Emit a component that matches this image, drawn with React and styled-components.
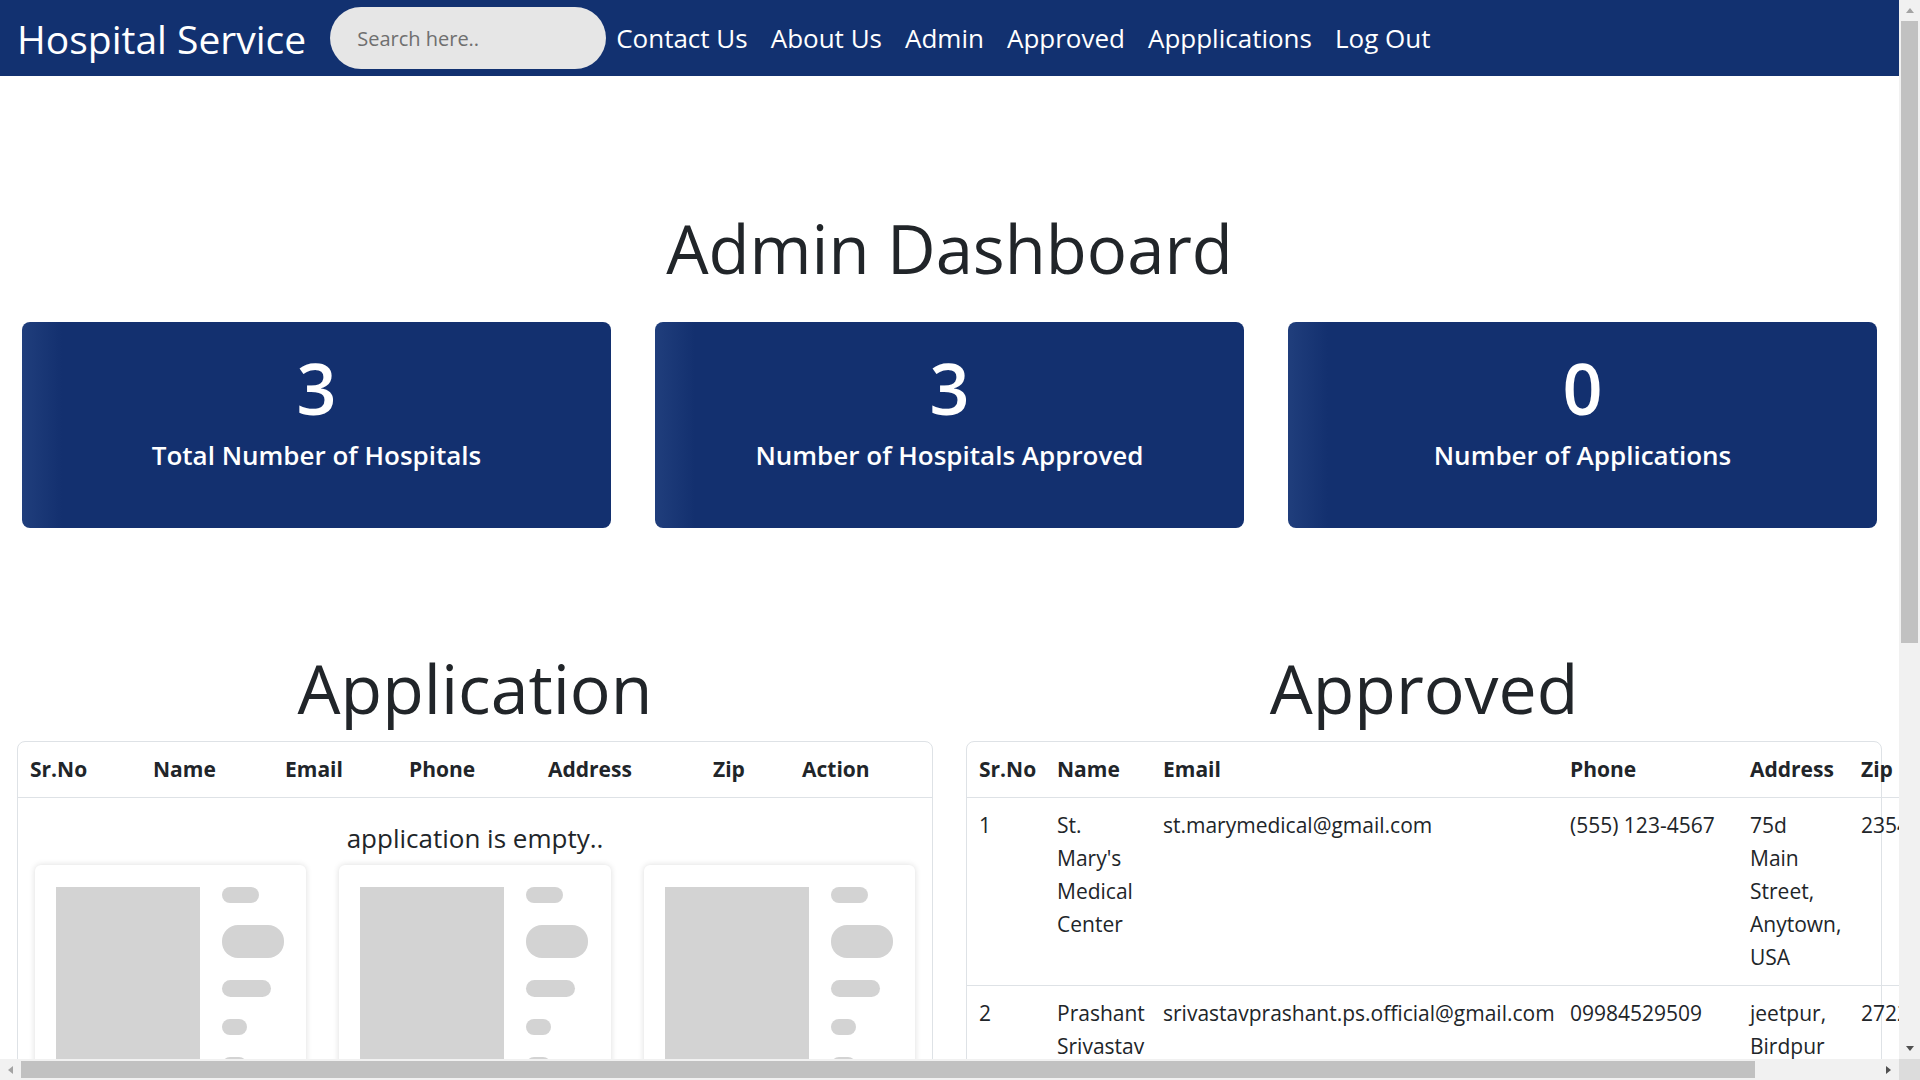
import React from 'react'
import styled, { createGlobalStyle } from "styled-components";

const GlobalStyle = createGlobalStyle`
  html, body {
    margin: 0;
    padding: 0;
    overflow: hidden;
  }
  body {
    font-family: "Open Sans", "Noto Sans", sans-serif;
    color: #212529;
    background: #fff;
  }
  * {
    box-sizing: border-box;
  }
`;

// browser frame: page area plus the classic scrollbars around it
const Frame = styled.div`
  display: grid;
  grid-template-columns: minmax(0, 1fr) 21px;
  grid-template-rows: minmax(0, 1fr) 21px;
  width: 100vw;
  height: 100vh;
`;

const ScrollArea = styled.div`
  overflow: hidden;
  min-width: 0;
  min-height: 0;
`;

const VScrollbar = styled.div`
  display: flex;
  flex-direction: column;
  background: #f1f1f1;
`;

const HScrollbar = styled.div`
  display: flex;
  background: #f1f1f1;
`;

const ScrollButton = styled.div`
  flex: 0 0 21px;
  display: flex;
  align-items: center;
  justify-content: center;
`;

const Arrow = styled.span`
  width: 0;
  height: 0;
  border-style: solid;
  border-color: transparent;
  ${(p) => {
    const c = p.$active ? '#505050' : '#a3a3a3';
    switch (p.$dir) {
      case 'up':
        return `border-width: 0 4.5px 5px; border-bottom-color: ${c};`;
      case 'down':
        return `border-width: 5px 4.5px 0; border-top-color: ${c};`;
      case 'left':
        return `border-width: 4.5px 5px 4.5px 0; border-right-color: ${c};`;
      default:
        return `border-width: 4.5px 0 4.5px 5px; border-left-color: ${c};`;
    }
  }}
`;

const Track = styled.div`
  flex: 1;
  display: flex;
  flex-direction: ${(p) => (p.$vertical ? 'column' : 'row')};
  padding: ${(p) => (p.$vertical ? '0 2px' : '2px 0')};
`;

const Thumb = styled.div`
  flex: 0 0 ${(p) => p.$size}px;
  background: #c1c1c1;
`;

const Corner = styled.div`
  background: #dcdcdc;
`;

const Page = styled.div`
  padding-bottom: 120px;
`;

const Navbar = styled.nav`
  display: flex;
  align-items: center;
  height: 76px;
  padding: 0 17px;
  background: #123170;
`;

const Brand = styled.a`
  font-size: 39px;
  color: #fff;
  text-decoration: none;
  margin-right: 24px;
  white-space: nowrap;
`;

const SearchInput = styled.input`
  width: 276px;
  height: 62px;
  border: none;
  border-radius: 31px;
  background: #e6e6e6;
  padding: 0 0 0 27px;
  font-family: inherit;
  font-size: 20px;
  color: #212529;
  outline: none;
  margin-right: 10px;

  &::placeholder {
    color: #6f6f6f;
  }
`;

const NavMenu = styled.ul`
  display: flex;
  gap: 23px;
  list-style: none;
  margin: 0;
  padding: 0;
`;

const NavLink = styled.a`
  font-size: 26px;
  color: #fff;
  text-decoration: none;
  white-space: nowrap;
`;

const PageTitle = styled.h1`
  margin: 130px 0 32px;
  font-size: 67px;
  font-weight: 500;
  line-height: 84px;
  text-align: center;
`;

const StatGrid = styled.div`
  display: grid;
  grid-template-columns: repeat(3, minmax(0, 1fr));
  gap: 44px;
  padding: 0 22px;
`;

const StatCard = styled.div`
  height: 206px;
  padding: 24px 16px;
  border-radius: 8px;
  background: linear-gradient(to right, #203e7c 0, #13306f 40px);
  color: #fff;
  text-align: center;
`;

const StatValue = styled.div`
  font-size: 70px;
  font-weight: 600;
  line-height: 84px;
`;

const StatLabel = styled.div`
  margin-top: 8px;
  font-size: 26px;
  font-weight: 600;
  line-height: 34px;
`;

const Sections = styled.div`
  display: grid;
  grid-template-columns: minmax(0, 1fr) minmax(0, 1fr);
  gap: 33px;
  padding: 0 17px;
  margin-top: 118px;
`;

const Section = styled.section`
  min-width: 0;
`;

const SectionTitle = styled.h2`
  margin: 0 0 11px;
  font-size: 68px;
  font-weight: 500;
  line-height: 84px;
  text-align: center;
`;

const TableCard = styled.div`
  border: 1px solid #dee2e6;
  border-radius: 8px;
`;

const Table = styled.table`
  width: ${(p) => p.$width || '100%'};
  border-collapse: collapse;
  table-layout: fixed;
  font-size: 21px;
  line-height: 33px;
`;

const Th = styled.th`
  padding: 11px 12px;
  text-align: left;
  font-weight: 700;
  border-bottom: 1px solid #dee2e6;
  white-space: nowrap;
`;

const Td = styled.td`
  padding: 11px 12px;
  vertical-align: top;
  border-bottom: 1px solid #dee2e6;
  white-space: ${(p) => (p.$nowrap ? 'nowrap' : 'normal')};
`;

const ActionButton = styled.button`
  font-family: inherit;
  font-size: 18px;
  padding: 2px 12px;
  border: none;
  border-radius: 6px;
  background: #dc3545;
  color: #fff;
`;

const EmptyState = styled.div`
  padding: 21px 17px 24px;
`;

const EmptyText = styled.p`
  margin: 0 0 7px;
  text-align: center;
  font-size: 26px;
  line-height: 39px;
`;

const SkeletonGrid = styled.div`
  display: grid;
  grid-template-columns: repeat(3, minmax(0, 1fr));
  gap: 33px;
`;

const SkeletonCard = styled.div`
  display: flex;
  gap: 22px;
  padding: 22px 21px;
  border-radius: 6px;
  background: #fff;
  box-shadow: 0 0 6px rgba(0, 0, 0, 0.14);
`;

const SkeletonImage = styled.div`
  width: 144px;
  height: 260px;
  background: #d3d3d3;
  flex-shrink: 0;
`;

const SkeletonLines = styled.div`
  display: flex;
  flex-direction: column;
  gap: 22px;
`;

const SkeletonPill = styled.div`
  width: ${(p) => p.$w}px;
  height: ${(p) => p.$h}px;
  border-radius: 16px;
  background: #d3d3d3;
`;

const navItems = ['Contact Us', 'About Us', 'Admin', 'Approved', 'Appplications', 'Log Out'];

const stats = [
  { value: 3, label: 'Total Number of Hospitals' },
  { value: 3, label: 'Number of Hospitals Approved' },
  { value: 0, label: 'Number of Applications' },
];

const approved = [
  { id: 1, name: "St. Mary's Medical Center", email: 'st.marymedical@gmail.com', phone: '(555) 123-4567', address: '75d Main Street, Anytown, USA', zip: '23546' },
  { id: 2, name: 'Prashant Srivastav', email: 'srivastavprashant.ps.official@gmail.com', phone: '09984529509', address: 'jeetpur, Birdpur', zip: '272207' },
  { id: 3, name: 'City Care Hospital', email: 'citycare.hospital@gmail.com', phone: '(555) 987-6543', address: '12 Park Road, Lucknow', zip: '226001' },
];

const appColumns = [
  ['Sr.No', 123], ['Name', 132], ['Email', 124], ['Phone', 139], ['Address', 165], ['Zip', 89], ['Action', null],
];

const approvedColumns = [
  ['Sr.No', 78], ['Name', 106], ['Email', 407], ['Phone', 180], ['Address', 111], ['Zip', 90], ['Action', 94],
];

const pills = [[37, 16], [62, 33], [49, 17], [25, 16], [25, 16]];

const App = () => {
  return (
    <Frame>
      <GlobalStyle />
      <ScrollArea>
        <Page>
          <Navbar>
            <Brand href="#">Hospital Service</Brand>
            <SearchInput type="text" placeholder="Search here.." />
            <NavMenu>
              {navItems.map((item) => (
                <li key={item}>
                  <NavLink href="#">{item}</NavLink>
                </li>
              ))}
            </NavMenu>
          </Navbar>

          <PageTitle>Admin Dashboard</PageTitle>

          <StatGrid>
            {stats.map((s) => (
              <StatCard key={s.label}>
                <StatValue>{s.value}</StatValue>
                <StatLabel>{s.label}</StatLabel>
              </StatCard>
            ))}
          </StatGrid>

          <Sections>
            <Section>
              <SectionTitle>Application</SectionTitle>
              <TableCard>
                <Table>
                  <colgroup>
                    {appColumns.map(([name, w]) => (
                      <col key={name} style={w ? { width: w } : undefined} />
                    ))}
                  </colgroup>
                  <thead>
                    <tr>
                      {appColumns.map(([name]) => <Th key={name}>{name}</Th>)}
                    </tr>
                  </thead>
                </Table>
                <EmptyState>
                  <EmptyText>application is empty..</EmptyText>
                  <SkeletonGrid>
                    {[0, 1, 2].map((i) => (
                      <SkeletonCard key={i}>
                        <SkeletonImage />
                        <SkeletonLines>
                          {pills.map(([w, h], j) => <SkeletonPill key={j} $w={w} $h={h} />)}
                        </SkeletonLines>
                      </SkeletonCard>
                    ))}
                  </SkeletonGrid>
                </EmptyState>
              </TableCard>
            </Section>

            <Section>
              <SectionTitle>Approved</SectionTitle>
              <TableCard>
                <Table $width="1066px">
                  <colgroup>
                    {approvedColumns.map(([name, w]) => (
                      <col key={name} style={{ width: w }} />
                    ))}
                  </colgroup>
                  <thead>
                    <tr>
                      {approvedColumns.map(([name]) => <Th key={name}>{name}</Th>)}
                    </tr>
                  </thead>
                  <tbody>
                    {approved.map((h) => (
                      <tr key={h.id}>
                        <Td>{h.id}</Td>
                        <Td>{h.name}</Td>
                        <Td $nowrap>{h.email}</Td>
                        <Td $nowrap>{h.phone}</Td>
                        <Td>{h.address}</Td>
                        <Td>{h.zip}</Td>
                        <Td><ActionButton>Remove</ActionButton></Td>
                      </tr>
                    ))}
                  </tbody>
                </Table>
              </TableCard>
            </Section>
          </Sections>
        </Page>
      </ScrollArea>

      <VScrollbar>
        <ScrollButton><Arrow $dir="up" /></ScrollButton>
        <Track $vertical>
          <Thumb $size={622} />
        </Track>
        <ScrollButton><Arrow $dir="down" $active /></ScrollButton>
      </VScrollbar>

      <HScrollbar>
        <ScrollButton><Arrow $dir="left" /></ScrollButton>
        <Track>
          <Thumb $size={1734} />
        </Track>
        <ScrollButton><Arrow $dir="right" $active /></ScrollButton>
      </HScrollbar>

      <Corner />
    </Frame>
  )
}

export default App
